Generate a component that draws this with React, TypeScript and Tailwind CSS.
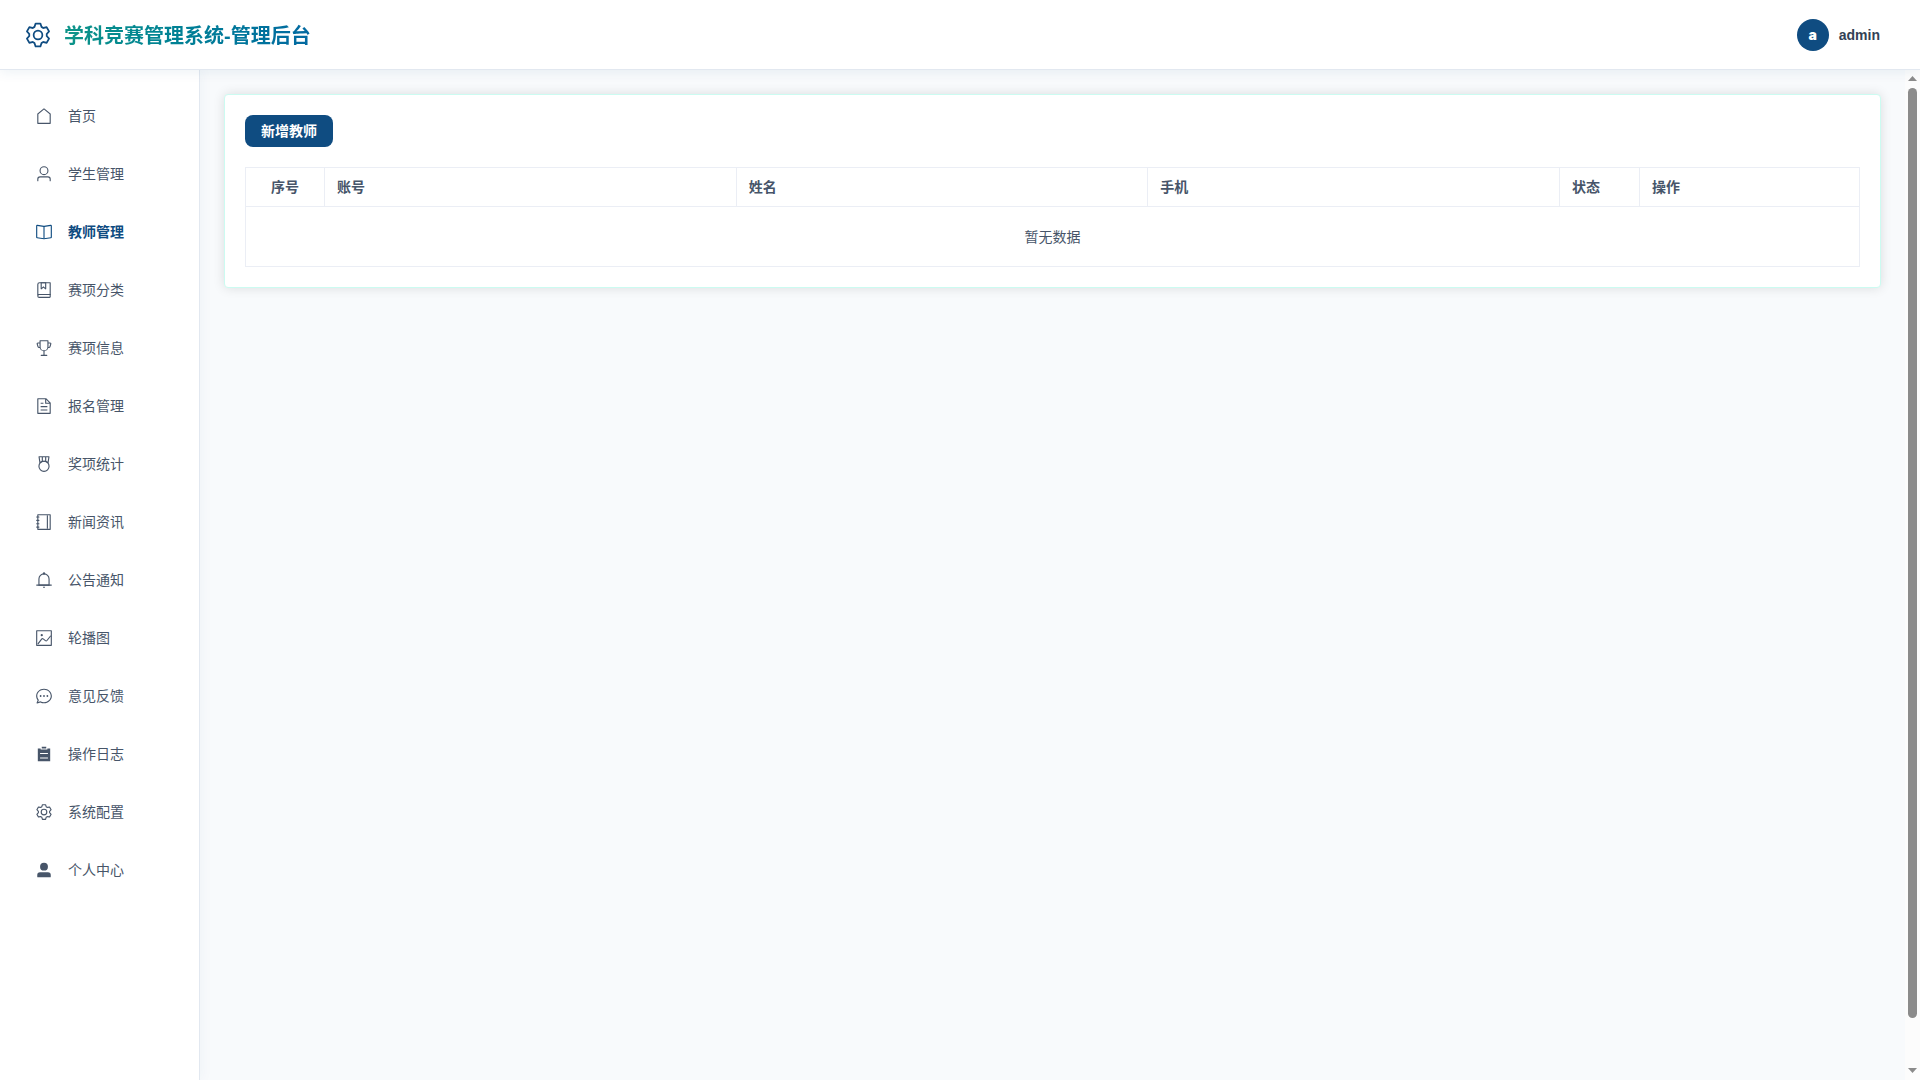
import type { ReactNode } from "react";
import clsx from "clsx";

const SETTING = [
  "M600.704 64a32 32 0 0 1 30.464 22.208l35.2 109.376c14.784 7.232 28.928 15.36 42.432 24.512l112.384-24.192a32 32 0 0 1 34.432 15.36L944.32 364.8a32 32 0 0 1-4.032 37.504l-77.12 85.12a357.12 357.12 0 0 1 0 49.024l77.12 85.248a32 32 0 0 1 4.032 37.504l-88.704 153.6a32 32 0 0 1-34.432 15.296L708.8 803.904c-13.44 9.088-27.648 17.28-42.368 24.512l-35.264 109.376A32 32 0 0 1 600.704 960H423.296a32 32 0 0 1-30.464-22.208L357.696 828.48a351.616 351.616 0 0 1-42.56-24.64l-112.32 24.256a32 32 0 0 1-34.432-15.36L79.68 659.2a32 32 0 0 1 4.032-37.504l77.12-85.248a357.12 357.12 0 0 1 0-48.896l-77.12-85.248A32 32 0 0 1 79.68 364.8l88.704-153.6a32 32 0 0 1 34.432-15.296l112.32 24.256c13.568-9.152 27.776-17.408 42.56-24.64l35.2-109.312A32 32 0 0 1 423.232 64H600.64zm-23.424 64H446.72l-36.352 113.088-24.512 11.968a294.113 294.113 0 0 0-34.816 20.096l-22.656 15.36-116.224-25.088-65.28 113.152 79.68 88.192-1.92 27.136a293.12 293.12 0 0 0 0 40.192l1.92 27.136-79.808 88.192 65.344 113.152 116.224-25.024 22.656 15.296a294.113 294.113 0 0 0 34.816 20.096l24.512 11.968L446.72 896h130.688l36.48-113.152 24.448-11.904a288.282 288.282 0 0 0 34.752-20.096l22.592-15.296 116.288 25.024 65.28-113.152-79.744-88.192 1.92-27.136a293.12 293.12 0 0 0 0-40.256l-1.92-27.136 79.808-88.128-65.344-113.152-116.288 24.96-22.592-15.232a287.616 287.616 0 0 0-34.752-20.096l-24.448-11.904L577.344 128zM512 320a192 192 0 1 1 0 384 192 192 0 0 1 0-384zm0 64a128 128 0 1 0 0 256 128 128 0 0 0 0-256z",
];

const menu = [
  {
    label: "首页",
    paths: [
      "M192 413.952V896h640V413.952L512 147.328 192 413.952zM139.52 374.4l352-293.312a32 32 0 0 1 40.96 0l352 293.312A32 32 0 0 1 896 398.976V928a32 32 0 0 1-32 32H160a32 32 0 0 1-32-32V398.976a32 32 0 0 1 11.52-24.576z",
    ],
  },
  {
    label: "学生管理",
    paths: [
      "M512 512a192 192 0 1 0 0-384 192 192 0 0 0 0 384zm0 64a256 256 0 1 1 0-512 256 256 0 0 1 0 512zm320 320v-96a96 96 0 0 0-96-96H288a96 96 0 0 0-96 96v96a32 32 0 1 1-64 0v-96a160 160 0 0 1 160-160h448a160 160 0 0 1 160 160v96a32 32 0 1 1-64 0z",
    ],
  },
  {
    label: "教师管理",
    active: true,
    paths: [
      "m512 863.36 384-54.848v-638.72L525.568 222.72a96 96 0 0 1-27.136 0L128 169.792v638.72l384 54.848zM137.024 106.432l370.432 52.928a32 32 0 0 0 9.088 0l370.432-52.928A64 64 0 0 1 960 169.792v638.72a64 64 0 0 1-54.976 63.36l-388.48 55.488a32 32 0 0 1-9.088 0l-388.48-55.488A64 64 0 0 1 64 808.512v-638.72a64 64 0 0 1 73.024-63.36z",
      "M480 192h64v704h-64z",
    ],
  },
  {
    label: "赛项分类",
    paths: [
      "M192 736h640V128H256a64 64 0 0 0-64 64v544zm64-672h608a32 32 0 0 1 32 32v672a32 32 0 0 1-32 32H160l-32 57.536V192A128 128 0 0 1 256 64z",
      "M240 800a48 48 0 1 0 0 96h592v-96H240zm0-64h656v160a64 64 0 0 1-64 64H240a112 112 0 0 1 0-224zm144-608v250.88l96-76.8 96 76.8V128H384zm-64-64h320v381.44a32 32 0 0 1-51.968 24.96L480 384l-108.032 86.4A32 32 0 0 1 320 445.44V64z",
    ],
  },
  {
    label: "赛项信息",
    paths: [
      "M480 896V702.08A256.256 256.256 0 0 1 264.064 512h-32.64a96 96 0 0 1-91.968-68.416L93.632 290.88a76.8 76.8 0 0 1 73.6-98.88H256V96a32 32 0 0 1 32-32h448a32 32 0 0 1 32 32v96h88.768a76.8 76.8 0 0 1 73.6 98.88L884.48 443.52A96 96 0 0 1 792.576 512h-32.64A256.256 256.256 0 0 1 544 702.08V896h128a32 32 0 1 1 0 64H352a32 32 0 1 1 0-64h128zm224-448V128H320v320a192 192 0 1 0 384 0zm64 0h24.576a32 32 0 0 0 30.656-22.784l45.824-152.768A12.8 12.8 0 0 0 856.768 256H768v192zm-512 0V256h-88.768a12.8 12.8 0 0 0-12.288 16.448l45.824 152.768A32 32 0 0 0 231.424 448H256z",
    ],
  },
  {
    label: "报名管理",
    paths: [
      "M832 384H576V128H192v768h640V384zm-26.496-64L640 154.496V320h165.504zM160 64h480l256 256v608a32 32 0 0 1-32 32H160a32 32 0 0 1-32-32V96a32 32 0 0 1 32-32zm160 448h384v64H320v-64zm0-192h160v64H320v-64zm0 384h384v64H320v-64z",
    ],
  },
  {
    label: "奖项统计",
    paths: [
      "M512 896a256 256 0 1 0 0-512 256 256 0 0 0 0 512zm0 64a320 320 0 1 1 0-640 320 320 0 0 1 0 640z",
      "M576 128H448v200a286.72 286.72 0 0 1 64-8c19.52 0 40.832 2.688 64 8V128zm64 0v219.648c24.448 9.088 50.56 20.416 78.4 33.92L757.44 128H640zm-256 0H266.624l39.04 253.568c27.84-13.504 53.888-24.832 78.336-33.92V128zM229.312 64h565.376a32 32 0 0 1 31.616 36.864L768 480c-113.792-64-199.104-96-256-96-56.896 0-142.208 32-256 96l-58.304-379.136A32 32 0 0 1 229.312 64z",
    ],
  },
  {
    label: "新闻资讯",
    paths: [
      "M192 128v768h640V128H192zm-32-64h704a32 32 0 0 1 32 32v832a32 32 0 0 1-32 32H160a32 32 0 0 1-32-32V96a32 32 0 0 1 32-32z",
      "M672 128h64v768h-64zM96 192h128q32 0 32 32t-32 32H96q-32 0-32-32t32-32zm0 192h128q32 0 32 32t-32 32H96q-32 0-32-32t32-32zm0 192h128q32 0 32 32t-32 32H96q-32 0-32-32t32-32zm0 192h128q32 0 32 32t-32 32H96q-32 0-32-32t32-32z",
    ],
  },
  {
    label: "公告通知",
    paths: [
      "M512 64a64 64 0 0 1 64 64v64H448v-64a64 64 0 0 1 64-64z",
      "M256 768h512V448a256 256 0 1 0-512 0v320zm256-640a320 320 0 0 1 320 320v384H192V448a320 320 0 0 1 320-320z",
      "M96 768h832q32 0 32 32t-32 32H96q-32 0-32-32t32-32zm352 128h128a64 64 0 0 1-128 0z",
    ],
  },
  {
    label: "轮播图",
    paths: [
      "M128 128v768h768V128H128zM96 64h832a32 32 0 0 1 32 32v832a32 32 0 0 1-32 32H96a32 32 0 0 1-32-32V96a32 32 0 0 1 32-32z",
      "M384 288q64 0 64 64t-64 64q-64 0-64-64t64-64zM185.408 876.992l-50.816-38.912L350.72 556.032a96 96 0 0 1 134.592-17.856l1.856 1.472 122.88 99.136a32 32 0 0 0 44.992-4.864l216-269.888 49.92 39.936-215.808 269.824-.256.32a96 96 0 0 1-135.04 14.464l-122.88-99.072-.64-.512a32 32 0 0 0-44.8 5.952L185.408 876.992z",
    ],
  },
  {
    label: "意见反馈",
    paths: [
      "m174.72 855.68 135.296-45.12 23.68 11.84C388.096 849.536 448.576 864 512 864c211.84 0 384-166.784 384-352S723.84 160 512 160 128 326.784 128 512c0 69.12 24.96 139.264 70.848 199.232l22.08 28.8-46.272 115.584zm-45.248 82.56A32 32 0 0 1 89.6 896l58.368-145.92C94.72 680.32 64 596.864 64 512 64 299.904 256 96 512 96s448 203.904 448 416-192 416-448 416a461.056 461.056 0 0 1-206.912-48.384l-175.616 58.56z",
      "M512 563.2a51.2 51.2 0 1 1 0-102.4 51.2 51.2 0 0 1 0 102.4zm192 0a51.2 51.2 0 1 1 0-102.4 51.2 51.2 0 0 1 0 102.4zm-384 0a51.2 51.2 0 1 1 0-102.4 51.2 51.2 0 0 1 0 102.4z",
    ],
  },
  {
    label: "操作日志",
    paths: ["M704 192h160v736H160V192h160v64h384v-64zM288 512h448v-64H288v64zm0 256h448v-64H288v64zm96-576V96h256v96H384z"],
  },
  { label: "系统配置", paths: SETTING },
  {
    label: "个人中心",
    paths: [
      "M288 320a224 224 0 1 0 448 0 224 224 0 1 0-448 0zm544 608H160a32 32 0 0 1-32-32v-96a160 160 0 0 1 160-160h448a160 160 0 0 1 160 160v96a32 32 0 0 1-32 32z",
    ],
  },
];

function Icon({ paths, className }: { paths: string[]; className: string }) {
  return (
    <svg viewBox="0 0 1024 1024" fill="currentColor" aria-hidden="true" className={className}>
      {paths.map((d) => (
        <path key={d} d={d} />
      ))}
    </svg>
  );
}

function HeadCell({ children, className }: { children: ReactNode; className?: string }) {
  return (
    <th scope="col" className={clsx("h-[39px] border border-[#ebeef5] px-3 font-semibold", className ?? "text-left")}>
      {children}
    </th>
  );
}

function ScrollTrack() {
  return (
    <div aria-hidden="true" className="flex w-[15px] shrink-0 flex-col items-center bg-[#fcfcfc] pt-[6px] pb-[7px]">
      <svg viewBox="0 0 9 5" className="h-[5px] w-[9px] fill-[#8b8b8b]">
        <path d="M4.5 0 9 5H0z" />
      </svg>
      <div className="mt-[7px] w-[9px] flex-1 rounded-full bg-[#8b8b8b]" />
      <svg viewBox="0 0 9 5" className="mt-[50px] h-[5px] w-[9px] fill-[#8b8b8b]">
        <path d="M0 0h9L4.5 5z" />
      </svg>
    </div>
  );
}

export default function App() {
  return (
    <div className="flex h-screen flex-col overflow-hidden bg-[#f8fafc] font-['Liberation_Sans','Noto_Sans_CJK_SC',sans-serif] text-sm text-[#475569]">
      <header className="relative z-10 flex h-[70px] shrink-0 items-center justify-between border-b border-[#e2e8f0] bg-white pr-10 pl-6 shadow-[0_2px_12px_rgba(15,76,129,0.08)]">
        <div className="flex items-center gap-3">
          <Icon paths={SETTING} className="size-7 text-[#0f4c81]" />
          <h1 className="bg-linear-to-r from-[#0d9488] to-[#0369a1] bg-clip-text pt-[2px] text-xl font-bold text-transparent">
            学科竞赛管理系统-管理后台
          </h1>
        </div>
        <button type="button" className="flex items-center gap-[10px]">
          <span className="flex size-8 items-center justify-center rounded-full bg-[#0f4c81] font-['Inter',sans-serif] font-black text-white">
            a
          </span>
          <span className="font-semibold text-[#334155]">admin</span>
        </button>
      </header>

      <div className="flex min-h-0 flex-1">
        <aside className="w-[200px] shrink-0 border-r border-[#e2e8f0] bg-white shadow-[2px_0_12px_rgba(15,76,129,0.04)]">
          <nav className="flex flex-col gap-2 px-[10px] pt-[21px]">
            {menu.map((item) => (
              <a
                key={item.label}
                href="#"
                aria-current={item.active ? "page" : undefined}
                className={clsx("flex h-[50px] items-center gap-[15px] pl-[25px]", item.active && "font-bold text-[#0f4c81]")}
              >
                <Icon paths={item.paths} className="size-[18px]" />
                {item.label}
              </a>
            ))}
          </nav>
        </aside>

        <main className="min-w-0 flex-1 p-6">
          <section className="rounded-sm border border-[#ccfbf1] bg-white p-5 shadow-[0_0_12px_rgba(0,0,0,0.12)]">
            <button type="button" className="h-8 rounded-lg bg-[#0f4c81] px-4 font-semibold text-white">
              新增教师
            </button>
            <table className="mt-5 w-full table-fixed border-collapse">
              <thead>
                <tr>
                  <HeadCell className="w-[79px] text-center">序号</HeadCell>
                  <HeadCell>账号</HeadCell>
                  <HeadCell>姓名</HeadCell>
                  <HeadCell>手机</HeadCell>
                  <HeadCell className="w-20 text-left">状态</HeadCell>
                  <HeadCell className="w-[220px] text-left">操作</HeadCell>
                </tr>
              </thead>
              <tbody>
                <tr>
                  <td colSpan={6} className="h-[60px] border border-[#ebeef5] text-center">
                    暂无数据
                  </td>
                </tr>
              </tbody>
            </table>
          </section>
        </main>

        <ScrollTrack />
      </div>
    </div>
  );
}
